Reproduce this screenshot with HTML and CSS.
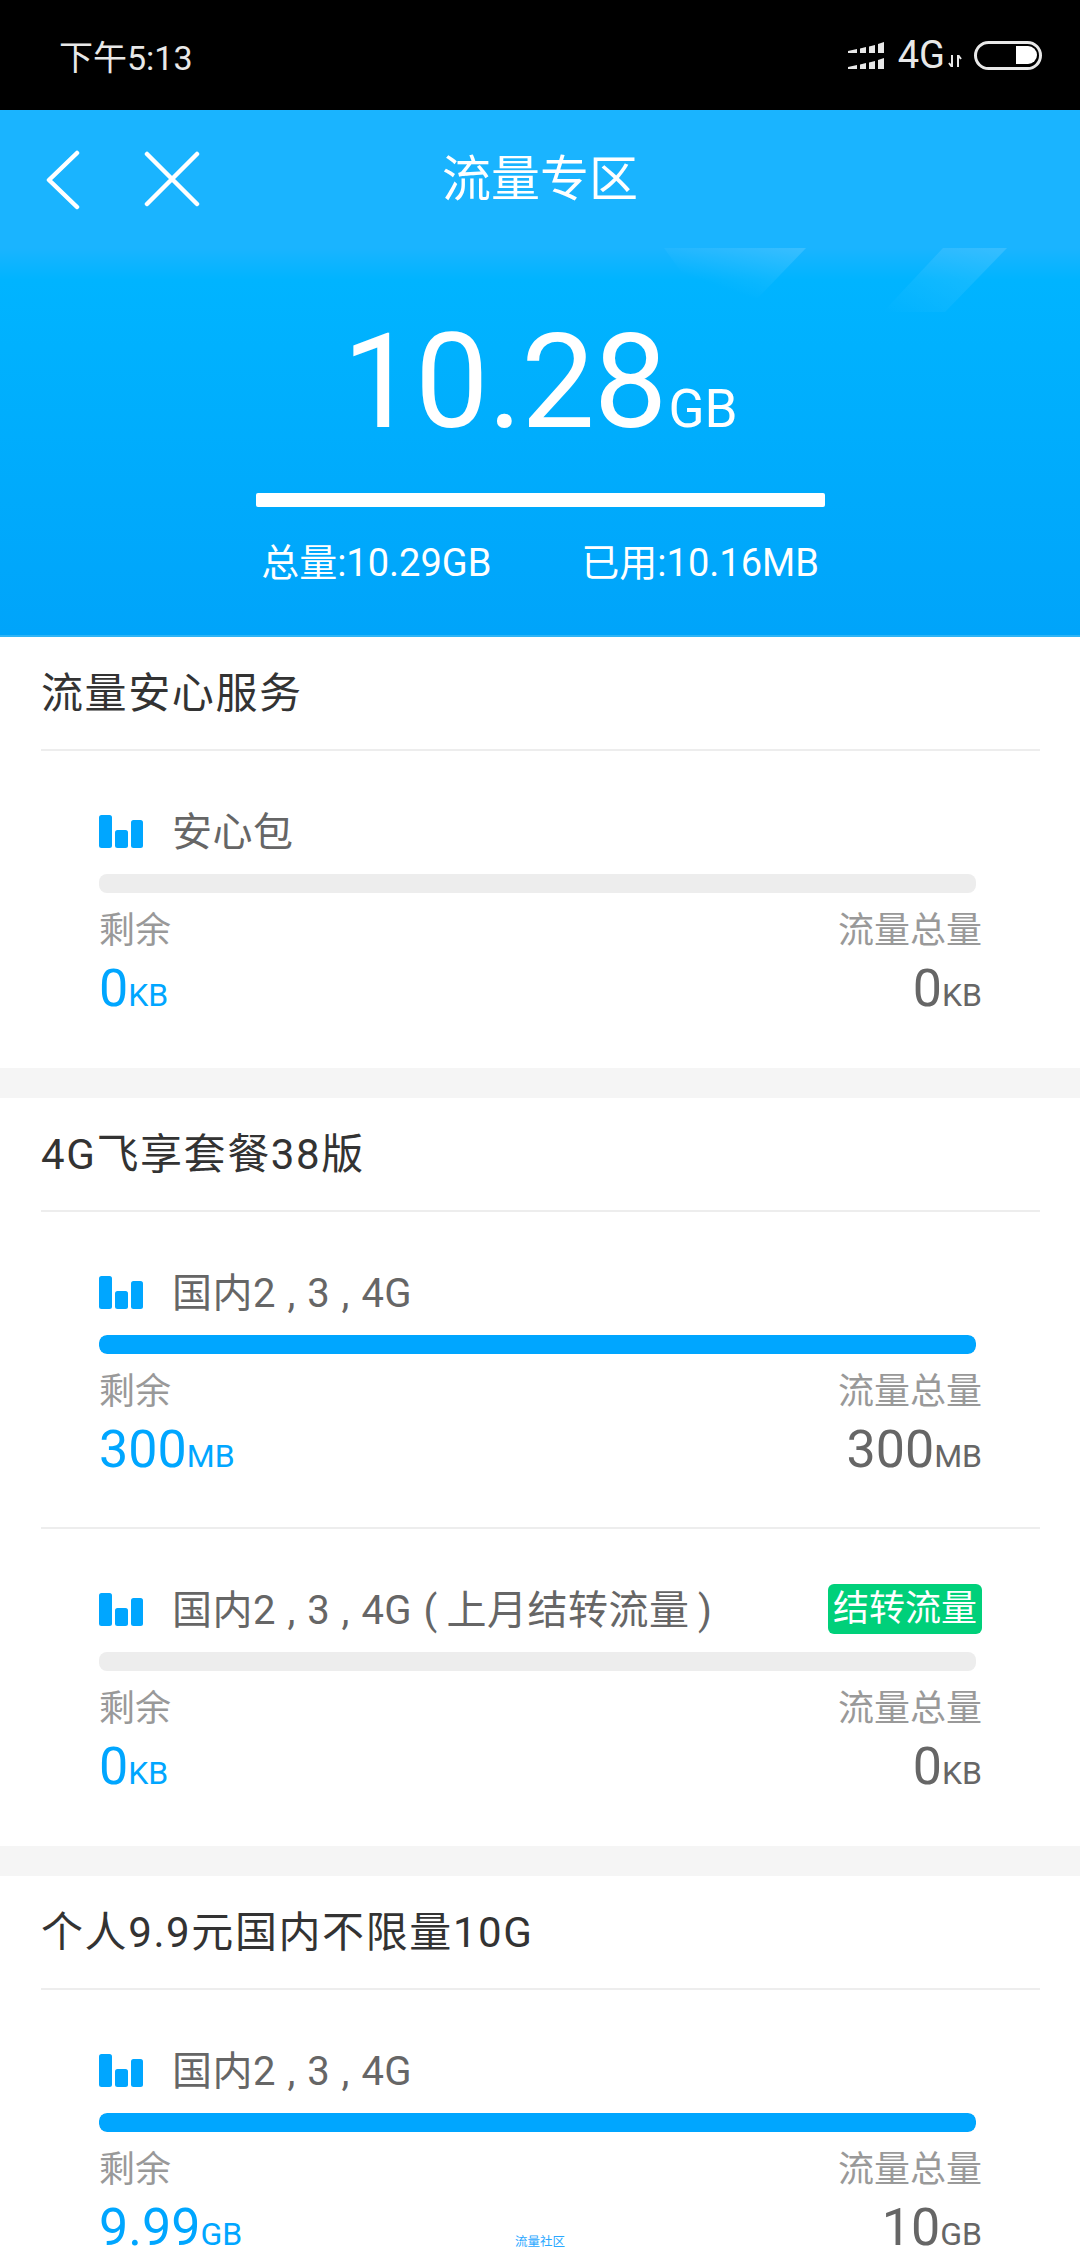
FILE: index.html
```html
<!DOCTYPE html>
<html lang="zh-CN">
<head>
<meta charset="utf-8">
<title>流量专区</title>
<link rel="stylesheet" href="styles.css">
</head>
<body>
<div class="page">
  <div class="status">
    <span class="clock">下午5:13</span>
    <div class="status-right">
      <svg class="signal" width="36" height="27" viewBox="0 0 36 27"><path d="M0 11V9l9-2v4zM12 11V6.500l6-1.500v6zM21 11V4.500l6-1.500v8zM30 11V2l6-2v11zM0 27v-2l9-2v4zM12 27v-4.500l6-1.500v6zM21 27v-6.500l6-1.500v8zM30 27v-9l6-2v11z" fill="#e8e8e8"/></svg>
      <span class="net">4G</span>
      <svg class="arrows" width="14" height="12" viewBox="0 0 14 12"><path d="M4 0v12M1 8l3 4M10 12V0M10 0l3 4" stroke="#e8e8e8" stroke-width="2" fill="none"/></svg>
      <svg class="battery" width="68" height="29" viewBox="0 0 68 29"><rect x="1.500" y="1.500" width="65" height="26" rx="13" fill="none" stroke="#e8e8e8" stroke-width="3"/><path d="M42 5h12a9 9 0 0 1 0 18H42z" fill="#fff"/></svg>
    </div>
  </div>
  <div class="nav">
    <svg class="nav-back" width="34" height="60" viewBox="0 0 34 60"><path d="M31 3L3 30l28 27" fill="none" stroke="#fff" stroke-width="4.500" stroke-linecap="round" stroke-linejoin="round"/></svg>
    <svg class="nav-close" width="56" height="56" viewBox="0 0 56 56"><path d="M3 3l50 50M53 3L3 53" fill="none" stroke="#fff" stroke-width="4.500" stroke-linecap="round"/></svg>
    <span class="nav-title">流量专区</span>
  </div>
  <div class="hero">
    <svg class="hero-deco" width="1080" height="70" viewBox="0 0 1080 70">
      <defs>
        <linearGradient id="d1" x1="1" y1="0" x2="0" y2="1"><stop offset="0" stop-color="#fff" stop-opacity=".14"/><stop offset=".7" stop-color="#fff" stop-opacity="0"/></linearGradient>
        <linearGradient id="d2" x1="1" y1="0" x2="0" y2="1"><stop offset="0" stop-color="#fff" stop-opacity=".13"/><stop offset="1" stop-color="#fff" stop-opacity="0"/></linearGradient>
      </defs>
      <path d="M664 0h142l-48 50h-58z" fill="url(#d1)"/>
      <path d="M943 0h64l-62 64h-62z" fill="url(#d2)"/>
    </svg>
    <div class="hero-num"><span class="hero-big">10.28</span><span class="hero-unit">GB</span></div>
    <div class="hero-bar"></div>
    <div class="hero-stats"><span>总量:10.29GB</span><span>已用:10.16MB</span></div>
  </div>

  <section class="card">
    <h2 class="card-title">流量安心服务</h2>
    <div class="item">
      <div class="item-head">
        <svg class="bars" width="44" height="33" viewBox="0 0 44 33"><rect width="13" height="33" rx="2.500"/><rect x="16" y="15" width="13" height="18" rx="2.500"/><rect x="32" y="5" width="12" height="28" rx="2.500"/></svg>
        <span class="item-name">安心包</span>
      </div>
      <div class="track"></div>
      <div class="row labels"><span>剩余</span><span>流量总量</span></div>
      <div class="row values"><span class="v-left">0<small>KB</small></span><span class="v-right">0<small>KB</small></span></div>
    </div>
  </section>

  <section class="card">
    <h2 class="card-title">4G飞享套餐38版</h2>
    <div class="item item-line">
      <div class="item-head">
        <svg class="bars" width="44" height="33" viewBox="0 0 44 33"><rect width="13" height="33" rx="2.500"/><rect x="16" y="15" width="13" height="18" rx="2.500"/><rect x="32" y="5" width="12" height="28" rx="2.500"/></svg>
        <span class="item-name">国内2 , 3 , 4G</span>
      </div>
      <div class="track"><div class="fill" style="width:100%"></div></div>
      <div class="row labels"><span>剩余</span><span>流量总量</span></div>
      <div class="row values"><span class="v-left">300<small>MB</small></span><span class="v-right">300<small>MB</small></span></div>
    </div>
    <div class="item">
      <div class="item-head">
        <svg class="bars" width="44" height="33" viewBox="0 0 44 33"><rect width="13" height="33" rx="2.500"/><rect x="16" y="15" width="13" height="18" rx="2.500"/><rect x="32" y="5" width="12" height="28" rx="2.500"/></svg>
        <span class="item-name">国内2 , 3 , 4G (&#8201;上月结转流量&#8201;)</span>
        <span class="tag">结转流量</span>
      </div>
      <div class="track"></div>
      <div class="row labels"><span>剩余</span><span>流量总量</span></div>
      <div class="row values"><span class="v-left">0<small>KB</small></span><span class="v-right">0<small>KB</small></span></div>
    </div>
  </section>

  <section class="card">
    <h2 class="card-title">个人9.9元国内不限量10G</h2>
    <div class="item">
      <div class="item-head">
        <svg class="bars" width="44" height="33" viewBox="0 0 44 33"><rect width="13" height="33" rx="2.500"/><rect x="16" y="15" width="13" height="18" rx="2.500"/><rect x="32" y="5" width="12" height="28" rx="2.500"/></svg>
        <span class="item-name">国内2 , 3 , 4G</span>
      </div>
      <div class="track"><div class="fill" style="width:100%"></div></div>
      <div class="row labels"><span>剩余</span><span>流量总量</span></div>
      <div class="row values"><span class="v-left">9.99<small>GB</small></span><span class="v-right">10<small>GB</small></span></div>
    </div>
  </section>
  <span class="community">流量社区</span>
</div>
</body>
</html>
```

FILE: styles.css
```css
* { box-sizing: border-box; }
html, body { margin: 0; padding: 0; }
body { background: #f5f5f5; font-family: Roboto, "Noto Sans CJK SC", sans-serif; }
.page { position: relative; width: 1080px; height: 2248px; overflow: hidden; }

.status { height: 110px; background: #000; display: flex; align-items: center; justify-content: space-between; padding: 0 38px 0 59px; }
.clock { color: #e8e8e8; font-size: 34px; }
.status-right { display: flex; align-items: center; }
.signal { margin-top: 1px; }
.net { color: #e8e8e8; font-size: 38px; margin-left: 14px; }
.arrows { margin: 12px 12px 0 3px; }

.nav { position: relative; height: 138px; background: #1ab4ff; display: flex; align-items: center; justify-content: center; }
.nav-back { position: absolute; left: 46px; top: 40px; }
.nav-close { position: absolute; left: 144px; top: 41px; }
.nav-title { color: #fff; font-size: 49px; font-weight: 400; margin-top: -9px; }

.hero { position: relative; height: 389px; background: linear-gradient(#1ab4ff, #00b4ff 32px, #00a4fa); border-bottom: 2px solid #2eb4f6; display: flex; flex-direction: column; align-items: center; }
.hero-deco { position: absolute; left: 0; top: 0; }
.hero-num { color: #fff; margin-top: 69px; height: 130px; line-height: 130px; display: flex; align-items: baseline; position: relative; }
.hero-big { font-size: 131px; font-weight: 400; letter-spacing: -1px; }
.hero-unit { font-size: 53px; font-weight: 400; margin-left: 2px; }
.hero-bar { width: 569px; height: 14px; background: #fff; border-radius: 2px; margin-top: 46px; position: relative; }
.hero-stats { display: flex; gap: 90px; margin-top: 34px; color: #fff; font-size: 38px; font-weight: 400; line-height: 44px; position: relative; }

.card { background: #fff; margin-bottom: 30px; padding: 0 40px 0 41px; }
.card-title { margin: 0; height: 114px; padding-top: 32px; border-bottom: 2px solid #ededed; font-size: 42px; font-weight: 400; line-height: 50px; color: #333; letter-spacing: 1.6px; }

.item { height: 317px; padding: 55px 58px 0 58px; }
.item-line { border-bottom: 2px solid #ededed; }
.item-head { display: flex; align-items: center; height: 50px; position: relative; }
.bars { flex: none; fill: #00a6ff; }
.item-name { margin: 3px 0 0 29px; font-size: 40px; color: #666; line-height: 50px; letter-spacing: .5px; word-spacing: 1px; white-space: pre; }
.tag { margin-left: auto; background: #00d07a; color: #fff; font-size: 36px; line-height: 50px; height: 50px; padding: 0 5px; border-radius: 6px; }
.track { height: 19px; margin: 18px 6px 0 0; background: #ededed; border-radius: 8px; overflow: hidden; }
.fill { height: 100%; background: #00a6ff; border-radius: 8px; }
.row { display: flex; justify-content: space-between; }
.labels { margin-top: 18px; font-size: 36px; line-height: 40px; color: #999; }
.values { margin-top: 6px; font-size: 52px; line-height: 64px; }
.values small { font-size: 32px; }
.v-left { color: #00a6ff; }
.v-right { color: #666; }
.community { position: absolute; left: 515px; top: 2235px; font-size: 12.500px; line-height: 14px; color: #2aa8ff; }
```
